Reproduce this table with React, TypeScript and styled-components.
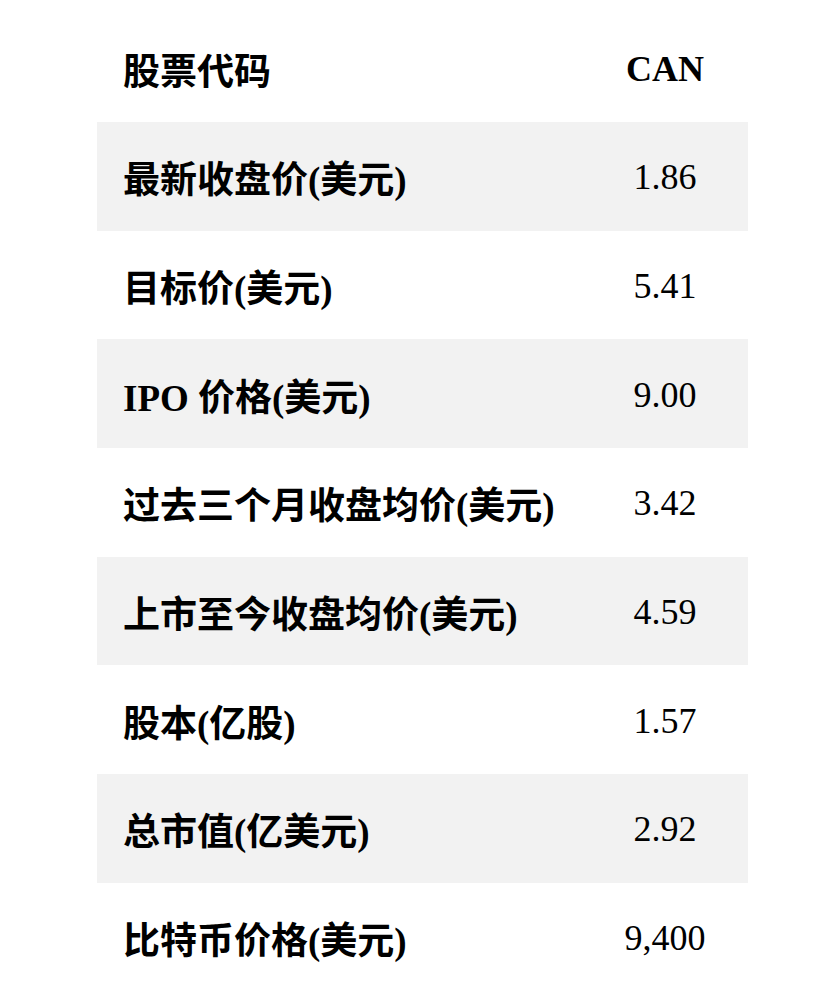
import styled, { createGlobalStyle } from 'styled-components';

const GlobalStyle = createGlobalStyle`
  html, body {
    margin: 0;
    padding: 0;
    background: #ffffff;
  }
  body {
    font-family: "Liberation Serif", "Noto Sans CJK SC", serif;
    color: #000000;
  }
`;

const Page = styled.div`
  padding: 13.3px 82px 16px 97px;
`;

const Table = styled.div`
  width: 651px;
  display: flex;
  flex-direction: column;
`;

const Row = styled.div<{ $shaded?: boolean }>`
  display: grid;
  grid-template-columns: 1fr 166px;
  align-items: center;
  height: 108.67px;
  background: ${({ $shaded }) => ($shaded ? '#f2f2f2' : 'transparent')};
`;

const Label = styled.div`
  padding-left: 26px;
  padding-top: 2px;
  font-size: 37px;
  font-weight: 700;
  white-space: nowrap;
`;

const Value = styled.div<{ $bold?: boolean }>`
  text-align: center;
  padding-top: 2px;
  font-size: 36px;
  font-weight: ${({ $bold }) => ($bold ? 700 : 400)};
`;

const rows = [
  { label: '最新收盘价(美元)', value: '1.86' },
  { label: '目标价(美元)', value: '5.41' },
  { label: 'IPO 价格(美元)', value: '9.00' },
  { label: '过去三个月收盘均价(美元)', value: '3.42' },
  { label: '上市至今收盘均价(美元)', value: '4.59' },
  { label: '股本(亿股)', value: '1.57' },
  { label: '总市值(亿美元)', value: '2.92' },
  { label: '比特币价格(美元)', value: '9,400' },
];

export default function App() {
  return (
    <>
      <GlobalStyle />
      <Page>
        <Table>
          <Row>
            <Label>股票代码</Label>
            <Value $bold>CAN</Value>
          </Row>
          {rows.map((r, i) => (
            <Row key={r.label} $shaded={i % 2 === 0}>
              <Label>{r.label}</Label>
              <Value>{r.value}</Value>
            </Row>
          ))}
        </Table>
      </Page>
    </>
  );
}
